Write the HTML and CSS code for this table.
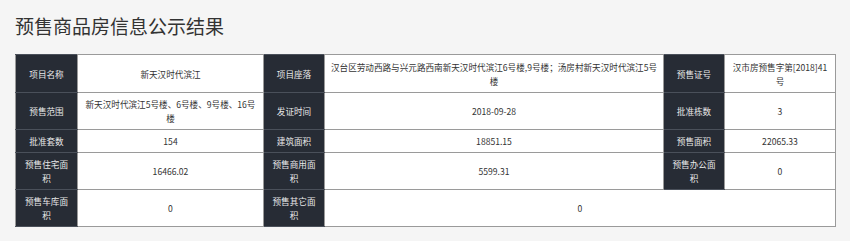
FILE: index.html
```html
<!DOCTYPE html>
<html>
<head>
<meta charset="utf-8">
<title>预售商品房信息公示结果</title>
<link rel="stylesheet" href="styles.css">
</head>
<body>
<div class="page">
  <h1 class="title">预售商品房信息公示结果</h1>
  <table class="info">
    <colgroup>
      <col class="c-lab"><col class="c-v1"><col class="c-lab2"><col class="c-v2"><col class="c-lab2"><col class="c-v3">
    </colgroup>
    <tr>
      <th>项目名称</th><td>新天汉时代滨江</td>
      <th>项目座落</th><td class="top"><span class="ln">汉台区劳动西路与兴元路西南新天汉时代滨江6号楼,9号楼；汤房村新天汉时代滨江5号</span><span class="ln">楼</span></td>
      <th>预售证号</th><td><span class="ln">汉市房预售字第[2018]41</span><span class="ln">号</span></td>
    </tr>
    <tr>
      <th>预售范围</th><td><span class="ln">新天汉时代滨江5号楼、6号楼、9号楼、16号</span><span class="ln">楼</span></td>
      <th>发证时间</th><td>2018-09-28</td>
      <th>批准栋数</th><td>3</td>
    </tr>
    <tr>
      <th>批准套数</th><td>154</td>
      <th>建筑面积</th><td>18851.15</td>
      <th>预售面积</th><td>22065.33</td>
    </tr>
    <tr>
      <th><span class="ln">预售住宅面</span><span class="ln">积</span></th><td>16466.02</td>
      <th><span class="ln">预售商用面</span><span class="ln">积</span></th><td>5599.31</td>
      <th><span class="ln">预售办公面</span><span class="ln">积</span></th><td>0</td>
    </tr>
    <tr>
      <th><span class="ln">预售车库面</span><span class="ln">积</span></th><td>0</td>
      <th><span class="ln">预售其它面</span><span class="ln">积</span></th><td colspan="3">0</td>
    </tr>
  </table>
</div>
</body>
</html>
```

FILE: styles.css
```css
html, body {
  margin: 0;
  padding: 0;
  background: #f5f5f5;
}
.page {
  padding: 14px 15px 0 15px;
  font-family: "Noto Sans CJK SC", "Microsoft YaHei", sans-serif;
}
.title {
  margin: 0 0 16px 0;
  font-size: 19px;
  line-height: 24px;
  font-weight: 400;
  color: #333;
}
.info {
  width: 820px;
  border-collapse: collapse;
  table-layout: fixed;
  border: 1px solid #9a9a9a;
  font-size: 8.6px;
  line-height: 14px;
  text-align: center;
}
.c-lab { width: 62px; }
.c-v1 { width: 186px; }
.c-lab2 { width: 61px; }
.c-v2 { width: 339px; }
.c-v3 { width: 111px; }
.info th, .info td {
  padding: 4px 2px;
  text-align: center;
  vertical-align: middle;
}
.ln {
  display: block;
  white-space: nowrap;
  text-align: center;
}
.info th {
  background: #272c35;
  color: #e8e8e8;
  font-weight: 400;
  border: 1px solid #4a505a;
  border-left-color: #9a9a9a;
  border-right-color: #9a9a9a;
}
.info td {
  background: #fff;
  color: #333;
  border: 1px solid #9a9a9a;
}
.info td.top {
  vertical-align: top;
}
.info tr:first-child th, .info tr:first-child td {
  padding-top: 5px;
}
```
